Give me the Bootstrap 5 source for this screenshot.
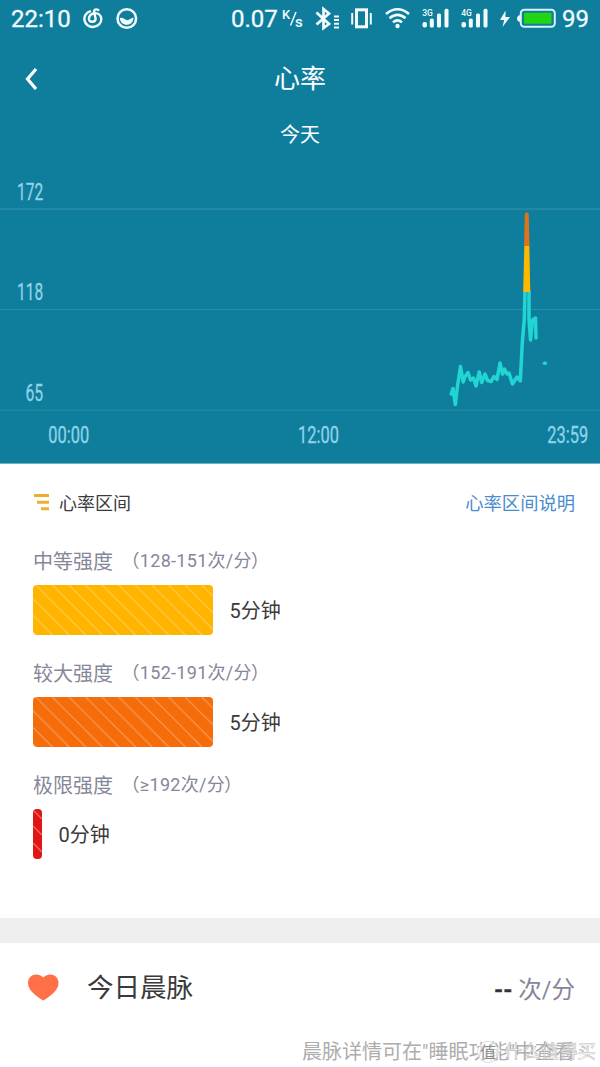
<!DOCTYPE html>
<html lang="zh-CN">
<head>
<meta charset="utf-8">
<meta name="viewport" content="width=device-width, initial-scale=1">
<title>心率</title>
<link rel="stylesheet" href="https://cdn.jsdelivr.net/npm/bootstrap@5.3.0/dist/css/bootstrap.min.css">
<style>
body{font-family:Roboto,"Noto Sans CJK SC",sans-serif;color:#3a3a3a;background:#fff;overflow:hidden}
.screen{width:600px;height:1067px}
.hero{background:#0f7e9d;height:464px;border-bottom:1px solid #6fb3c5}
.status-row{height:38px;font-size:24px;line-height:38px;padding-left:11px;color:#f2fbfd}
.status-row svg{flex:none;display:block}
.status-row span{white-space:nowrap;-webkit-text-stroke:.3px #f2fbfd}
.w-clock{width:72px}.w-rate{width:51px}
.ring-icon{margin-left:12px}
.title-row{height:80px;font-size:26px;line-height:83px}
.back-btn{left:24px;top:28px}
.day-label{font-size:20px;line-height:35px;height:62px}
.plot{height:284px}
.zones{height:454px;padding:25px 25px 0 33px}
.zones-head{font-size:18px;line-height:30px;height:60px}
.zones-head a{color:#4a8cce;font-size:18.300px}
.zone{height:112px}
.zone-name{font-size:20px;line-height:27px;color:#858799;height:36px}
.zone-range{font-size:18px;line-height:23px;margin-left:8.500px;letter-spacing:.3px}
.paren-end{margin-left:-1px}
.zone-bar{height:50px;width:180px;border-radius:4px;overflow:hidden}
.zone-bar svg{display:block}
.zone-min{width:9px}
.zone-time{font-size:20px;margin-left:16.500px;padding-top:1px}
.gap-band{height:25px;background:#efefef}
.pulse{height:88px;padding:0 25px 0 28px}
.pulse-name{font-size:26.500px;margin-left:28px;padding-top:1px}
.pulse-unit{font-size:23.500px;color:#858799;padding-top:7px}
.pulse-unit b{color:#333;-webkit-text-stroke:.3px #333}
.note{font-size:20px;line-height:30px;color:#adadad;padding-left:302px;top:6px}
.stamp{left:475px;top:1px;font-size:18.400px;line-height:28px;color:rgba(255,255,255,.65);-webkit-text-stroke:.6px rgba(160,160,160,.75)}
.stamp span{margin-left:4px}
</style>
</head>
<body>
<main class="screen position-relative overflow-hidden">
<header class="hero text-white">
  <div class="status-row d-flex align-items-center">
    <span class="w-clock">22:10</span>
    <svg width="21" height="38" viewBox="83 0 21 38" fill="none" stroke="#f2fbfd" stroke-width="2.400" stroke-linecap="round"><path d="M90 11.300C86 12.500 83.800 16.500 84.500 20.200C85.300 24.500 89 27.200 93 27C98 26.800 101.500 23 101.300 18.800C101 15 98 12.800 94.500 13.200C90.800 13.600 88.500 16.500 89 19.500C89.700 22.700 95.600 22.700 95.600 18.700L94.200 12.500C93.600 9.600 96 8.700 98.300 10"/></svg>
    <svg class="ring-icon" width="22" height="38" viewBox="116 0 22 38"><circle cx="126.800" cy="18.500" r="9.300" fill="none" stroke="#f2fbfd" stroke-width="2.500"/><path d="M119.800 18C122 17 124 18.500 126.500 20C129 21 131 17.200 133.500 17.800C133.300 22.500 130.500 24.800 126.800 24.800C123 24.800 120 22 119.800 18Z" fill="#f2fbfd"/></svg>
    <svg width="93" height="38"></svg>
    <span class="w-rate">0.07</span>
    <svg width="33" height="38" viewBox="282 0 33 38" fill="#f2fbfd" font-family="Roboto"><text x="282" y="18.500" font-size="13" font-weight="500">K</text><path d="M290.500 25.500L296 12" stroke="#f2fbfd" stroke-width="1.500"/><text x="295" y="27" font-size="15" font-weight="500">s</text></svg>
    <svg width="36" height="38" viewBox="315 0 36 38" fill="none" stroke="#f2fbfd"><path d="M316.500 12.500L329 24L323.500 28V9L329 13.500L316.500 24.500" stroke-width="2.700"/><path d="M334 16.500h5M334 20h5M334 23.700h5M334 27.500h5" stroke-width="2"/></svg>
    <svg width="34" height="38" viewBox="351 0 34 38" fill="none" stroke="#f2fbfd"><rect x="356.500" y="9.800" width="10" height="17" stroke-width="3"/><path d="M352.200 13v11.500M370.800 13v11.500" stroke-width="2"/></svg>
    <svg width="37" height="38" viewBox="385 0 37 38" fill="none" stroke="#f2fbfd" stroke-width="2.600"><path d="M386 14Q397.500 4.500 409 14M389.500 18.300Q397.500 11.500 405.500 18.300M393 22.400Q397.500 18.300 402 22.400"/><circle cx="397.500" cy="26" r="2.200" fill="#f2fbfd" stroke="none"/></svg>
    <svg width="39" height="38" viewBox="422 0 39 38" fill="#f2fbfd"><text x="422.200" y="15.800" font-family="Roboto" font-size="8.500" font-weight="500">3G</text><rect x="422.500" y="22" width="4.500" height="5.500" rx="2"/><rect x="429.800" y="18.500" width="4" height="9" rx="1.500"/><rect x="437" y="13.500" width="4" height="14" rx="1.500"/><rect x="444.500" y="8.800" width="4" height="18.700" rx="1.500"/></svg>
    <svg width="39" height="38" viewBox="461 0 39 38" fill="#f2fbfd"><text x="461.200" y="15.800" font-family="Roboto" font-size="8.500" font-weight="500">4G</text><rect x="461.500" y="22" width="4.500" height="5.500" rx="2"/><rect x="468.800" y="18.500" width="4" height="9" rx="1.500"/><rect x="476" y="13.500" width="4" height="14" rx="1.500"/><rect x="483.500" y="8.800" width="4" height="18.700" rx="1.500"/></svg>
    <svg width="17" height="38" viewBox="500 0 17 38"><path d="M505.500 10.500L500 20H504.200L502.500 27L510 17H505.500Z" fill="#f2fbfd"/></svg>
    <svg width="45" height="38" viewBox="517 0 45 38"><path d="M520 15Q517 16 517 18.500T520 22Z" fill="#f2fbfd"/><rect x="520.800" y="9.800" width="34" height="17" rx="3.500" fill="none" stroke="#d7f3fa" stroke-width="2"/><rect x="524" y="12.800" width="27.500" height="11" rx="1" fill="#22d411"/></svg>
    <span>99</span>
  </div>
  <div class="title-row position-relative text-center">
    <svg class="back-btn position-absolute" width="16" height="26" viewBox="24 66 16 26"><path d="M36 69L27.500 79L36 89" fill="none" stroke="#fff" stroke-width="3.200"/></svg>
    心率
  </div>
  <div class="day-label text-center">今天</div>
  <svg class="plot d-block w-100" viewBox="0 180 600 284">
    <g stroke="#288eab"><path d="M0 209H600" stroke-width="1.500"/><path d="M0 309.500H600M0 410.200H600"/></g>
    <g fill="#8fd3e8" stroke="#8fd3e8" stroke-width=".3" font-family="Roboto" font-size="23.500">
      <text transform="translate(17 199.500) scale(.66 1)">172</text>
      <text transform="translate(17 300) scale(.66 1)">118</text>
      <text transform="translate(25.500 401) scale(.67 1)">65</text>
      <text transform="translate(48.300 442.500) scale(.7 1)">00:00</text>
      <text transform="translate(298 442.500) scale(.7 1)">12:00</text>
      <text transform="translate(547.300 442.500) scale(.7 1)">23:59</text>
    </g>
    <g fill="none" stroke-width="3.500" stroke-linecap="round" stroke-linejoin="round" stroke="#20d5d2">
      <path d="M451.200 394L453 388.500L455.300 404.500L457.500 386L460.500 366.500L463.200 382L465 376.500L468 372.500L470.500 380L473.500 378L476 386L479.200 372L481.800 382.500L485 374L487.500 380.500L491 381.500L494 376.500L497 379.500L500 363L502.500 374L504.500 369L507 374L509 373L512.500 384L517 377L520.300 381L522.200 344L524.300 319L525 292M529 292V319L530.500 340L532.500 320L535.500 318L536 338"/>
      <path d="M544.500 363.200h.8"/>
    </g>
    <path d="M524.300 246L523.200 292H530.300L529.300 246Z" fill="#ffb800"/>
    <path d="M524.800 214Q526.800 210.500 528.700 214L529.500 246H524.100Z" fill="#e07319"/>
  </svg>
</header>

<section class="zones">
  <div class="zones-head d-flex justify-content-between">
    <div class="d-flex">
      <svg width="26" height="30" viewBox="0 0 26 30" stroke="#efae31" stroke-width="3"><path d="M1 6.500H16M4 13.300H16M8 19.700H16"/></svg>
      心率区间
    </div>
    <a class="text-decoration-none" href="#">心率区间说明</a>
  </div>
  <div class="zone">
    <div class="zone-name d-flex"><span>中等强度</span><span class="zone-range">（128-151次/分<span class="paren-end">）</span></span></div>
    <div class="d-flex align-items-center">
      <div class="zone-bar"><svg width="180" height="50"><defs><pattern id="hatch" width="16.600" height="50" patternUnits="userSpaceOnUse" x="1"><path d="M-49 -1L3 51M-32.400 -1L19.600 51M-15.800 -1L36.200 51M.8 -1L52.800 51" stroke="#fff" stroke-opacity=".28" stroke-width="1.300"/></pattern></defs><rect width="180" height="50" fill="#ffb400"/><rect width="180" height="50" fill="url(#hatch)"/></svg></div>
      <span class="zone-time">5分钟</span>
    </div>
  </div>
  <div class="zone">
    <div class="zone-name d-flex"><span>较大强度</span><span class="zone-range">（152-191次/分<span class="paren-end">）</span></span></div>
    <div class="d-flex align-items-center">
      <div class="zone-bar"><svg width="180" height="50"><rect width="180" height="50" fill="#f56c0b"/><rect width="180" height="50" fill="url(#hatch)"/></svg></div>
      <span class="zone-time">5分钟</span>
    </div>
  </div>
  <div class="zone">
    <div class="zone-name d-flex"><span>极限强度</span><span class="zone-range">（≥192次/分<span class="paren-end">）</span></span></div>
    <div class="d-flex align-items-center">
      <div class="zone-bar zone-min"><svg width="9" height="50"><rect width="9" height="50" fill="#e01515"/><path d="M0 1L9 10M0 17L9 26M0 34L9 43" stroke="#f06a64" stroke-width="1.300"/></svg></div>
      <span class="zone-time">0分钟</span>
    </div>
  </div>
</section>

<div class="gap-band"></div>
<section class="pulse d-flex align-items-center">
  <svg width="31" height="27" viewBox="0 0 31 27"><path d="M15.300 26.500C9 22.500 0 17 0 9C0 3.500 4 .5 8 .5C11.500 .5 14 2 15.300 3.500C16.600 2 19 .5 22.500 .5C27 .5 30.500 4 30.500 9C30.500 17 21.500 22.500 15.300 26.500Z" fill="#ff7048"/></svg>
  <span class="pulse-name">今日晨脉</span>
  <span class="ms-auto pulse-unit"><b>--</b> 次/分</span>
</section>
<div class="note position-relative text-nowrap">晨脉详情可在"睡眠功能"中查看
  <div class="stamp position-absolute d-flex align-items-center">
    <svg width="25" height="28" viewBox="0 0 25 28"><circle cx="13" cy="14" r="10.500" fill="#fff" fill-opacity=".6" stroke="#d4d4d4" stroke-width=".8"/><text x="5" y="19.500" font-size="16" fill="#8a8a8a" stroke="none">值</text></svg>
    <span>什么值得买</span>
  </div>
</div>
</main>
<script src="https://cdn.jsdelivr.net/npm/bootstrap@5.3.0/dist/js/bootstrap.bundle.min.js"></script>
</body>
</html>
